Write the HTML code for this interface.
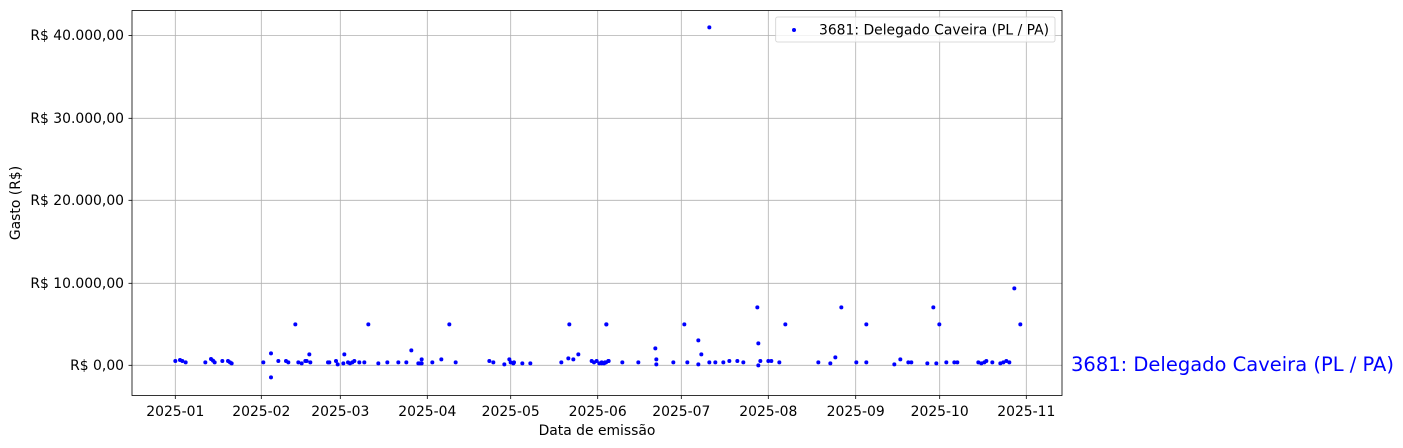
<!DOCTYPE html>
<html><head><meta charset="utf-8"><style>
html,body{margin:0;padding:0;background:#fff;}
svg{display:block;font-family:"DejaVu Sans","Liberation Sans",sans-serif;}
</style></head><body>
<svg width="1403" height="448" viewBox="0 0 1403 448" xmlns="http://www.w3.org/2000/svg">
<rect width="1403" height="448" fill="#fff"/>
<g stroke="#b0b0b0" stroke-width="0.8">
<line x1="175.3" y1="10.5" x2="175.3" y2="395.5"/>
<line x1="261.3" y1="10.5" x2="261.3" y2="395.5"/>
<line x1="340.3" y1="10.5" x2="340.3" y2="395.5"/>
<line x1="427.3" y1="10.5" x2="427.3" y2="395.5"/>
<line x1="510.7" y1="10.5" x2="510.7" y2="395.5"/>
<line x1="597.7" y1="10.5" x2="597.7" y2="395.5"/>
<line x1="681.3" y1="10.5" x2="681.3" y2="395.5"/>
<line x1="768.3" y1="10.5" x2="768.3" y2="395.5"/>
<line x1="855.7" y1="10.5" x2="855.7" y2="395.5"/>
<line x1="939.7" y1="10.5" x2="939.7" y2="395.5"/>
<line x1="1026.3" y1="10.5" x2="1026.3" y2="395.5"/>
<line x1="132" y1="35.5" x2="1062" y2="35.5"/>
<line x1="132" y1="118.3" x2="1062" y2="118.3"/>
<line x1="132" y1="200.3" x2="1062" y2="200.3"/>
<line x1="132" y1="283.3" x2="1062" y2="283.3"/>
<line x1="132" y1="365.3" x2="1062" y2="365.3"/>
</g>
<g stroke="#000" stroke-width="0.8">
<line x1="175.3" y1="395.5" x2="175.3" y2="399"/>
<line x1="261.3" y1="395.5" x2="261.3" y2="399"/>
<line x1="340.3" y1="395.5" x2="340.3" y2="399"/>
<line x1="427.3" y1="395.5" x2="427.3" y2="399"/>
<line x1="510.7" y1="395.5" x2="510.7" y2="399"/>
<line x1="597.7" y1="395.5" x2="597.7" y2="399"/>
<line x1="681.3" y1="395.5" x2="681.3" y2="399"/>
<line x1="768.3" y1="395.5" x2="768.3" y2="399"/>
<line x1="855.7" y1="395.5" x2="855.7" y2="399"/>
<line x1="939.7" y1="395.5" x2="939.7" y2="399"/>
<line x1="1026.3" y1="395.5" x2="1026.3" y2="399"/>
<line x1="128.5" y1="35.5" x2="132" y2="35.5"/>
<line x1="128.5" y1="118.3" x2="132" y2="118.3"/>
<line x1="128.5" y1="200.3" x2="132" y2="200.3"/>
<line x1="128.5" y1="283.3" x2="132" y2="283.3"/>
<line x1="128.5" y1="365.3" x2="132" y2="365.3"/>
</g>
<g fill="#0000ff">
<g transform="translate(120,0) scale(0.3333333)">
<circle cx="166" cy="1083" r="6"/><circle cx="180" cy="1080" r="6"/><circle cx="187" cy="1083" r="6"/><circle cx="197" cy="1087" r="6"/><circle cx="256" cy="1087" r="6"/><circle cx="273" cy="1077" r="6"/><circle cx="279" cy="1082" r="6"/><circle cx="284" cy="1087" r="6"/><circle cx="307" cy="1083" r="6"/><circle cx="324" cy="1083" r="6"/><circle cx="330" cy="1087" r="6"/><circle cx="335" cy="1090" r="6"/><circle cx="430" cy="1087" r="6"/><circle cx="453" cy="1060" r="6"/><circle cx="453" cy="1132" r="6"/><circle cx="475" cy="1083" r="6"/><circle cx="498" cy="1083" r="6"/><circle cx="505" cy="1087" r="6"/><circle cx="526" cy="973" r="6"/><circle cx="535" cy="1087" r="6"/><circle cx="545" cy="1090" r="6"/><circle cx="556" cy="1083" r="6"/><circle cx="560" cy="1083" r="6"/><circle cx="568" cy="1063" r="6"/><circle cx="571" cy="1087" r="6"/><circle cx="624" cy="1087" r="6"/><circle cx="628" cy="1087" r="6"/><circle cx="648" cy="1083" r="6"/><circle cx="653" cy="1093" r="6"/><circle cx="670" cy="1090" r="6"/><circle cx="673" cy="1063" r="6"/><circle cx="684" cy="1087" r="6"/><circle cx="690" cy="1090" r="6"/><circle cx="697" cy="1087" r="6"/><circle cx="703" cy="1083" r="6"/><circle cx="718" cy="1087" r="6"/><circle cx="733" cy="1087" r="6"/><circle cx="745" cy="973" r="6"/><circle cx="775" cy="1090" r="6"/><circle cx="802" cy="1087" r="6"/><circle cx="835" cy="1087" r="6"/><circle cx="859" cy="1087" r="6"/><circle cx="874" cy="1051" r="6"/><circle cx="895" cy="1090" r="6"/><circle cx="900" cy="1090" r="6"/><circle cx="905" cy="1078" r="6"/><circle cx="905" cy="1090" r="6"/><circle cx="937" cy="1087" r="6"/><circle cx="964" cy="1078" r="6"/><circle cx="988" cy="973" r="6"/><circle cx="1007" cy="1087" r="6"/><circle cx="1108" cy="1083" r="6"/><circle cx="1120" cy="1087" r="6"/><circle cx="1153" cy="1093" r="6"/><circle cx="1168" cy="1078" r="6"/><circle cx="1172" cy="1087" r="6"/><circle cx="1180" cy="1090" r="6"/><circle cx="1182" cy="1087" r="6"/><circle cx="1207" cy="1090" r="6"/><circle cx="1231" cy="1090" r="6"/><circle cx="1324" cy="1087" r="6"/><circle cx="1345" cy="1075" r="6"/><circle cx="1348" cy="973" r="6"/><circle cx="1360" cy="1078" r="6"/><circle cx="1375" cy="1063" r="6"/><circle cx="1415" cy="1083" r="6"/><circle cx="1422" cy="1087" r="6"/><circle cx="1430" cy="1083" r="6"/><circle cx="1438" cy="1090" r="6"/><circle cx="1445" cy="1090" r="6"/><circle cx="1452" cy="1090" r="6"/><circle cx="1458" cy="1087" r="6"/><circle cx="1459" cy="973" r="6"/><circle cx="1466" cy="1083" r="6"/>
</g>
<g transform="translate(600,0) scale(0.3333333)">
<circle cx="5" cy="1087" r="6"/><circle cx="15" cy="1087" r="6"/><circle cx="19" cy="973" r="6"/><circle cx="25" cy="1083" r="6"/><circle cx="67" cy="1087" r="6"/><circle cx="115" cy="1087" r="6"/><circle cx="166" cy="1045" r="6"/><circle cx="169" cy="1078" r="6"/><circle cx="169" cy="1093" r="6"/><circle cx="220" cy="1087" r="6"/><circle cx="253" cy="973" r="6"/><circle cx="262" cy="1087" r="6"/><circle cx="295" cy="1021" r="6"/><circle cx="295" cy="1093" r="6"/><circle cx="304" cy="1063" r="6"/><circle cx="328" cy="1087" r="6"/><circle cx="328" cy="82" r="6"/><circle cx="346" cy="1087" r="6"/><circle cx="370" cy="1087" r="6"/><circle cx="388" cy="1083" r="6"/><circle cx="412" cy="1083" r="6"/><circle cx="430" cy="1087" r="6"/><circle cx="472" cy="922" r="6"/><circle cx="475" cy="1030" r="6"/><circle cx="475" cy="1096" r="6"/><circle cx="481" cy="1083" r="6"/><circle cx="505" cy="1083" r="6"/><circle cx="514" cy="1083" r="6"/><circle cx="538" cy="1087" r="6"/><circle cx="556" cy="973" r="6"/><circle cx="655" cy="1087" r="6"/><circle cx="691" cy="1090" r="6"/><circle cx="706" cy="1072" r="6"/><circle cx="724" cy="922" r="6"/><circle cx="769" cy="1087" r="6"/><circle cx="799" cy="973" r="6"/><circle cx="799" cy="1087" r="6"/><circle cx="883" cy="1093" r="6"/><circle cx="901" cy="1078" r="6"/><circle cx="925" cy="1087" r="6"/><circle cx="934" cy="1087" r="6"/><circle cx="982" cy="1090" r="6"/><circle cx="1000" cy="922" r="6"/><circle cx="1009" cy="1090" r="6"/><circle cx="1018" cy="973" r="6"/><circle cx="1039" cy="1087" r="6"/><circle cx="1063" cy="1087" r="6"/><circle cx="1072" cy="1087" r="6"/><circle cx="1135" cy="1087" r="6"/><circle cx="1144" cy="1090" r="6"/><circle cx="1153" cy="1087" r="6"/><circle cx="1159" cy="1083" r="6"/><circle cx="1177" cy="1087" r="6"/><circle cx="1201" cy="1090" r="6"/><circle cx="1210" cy="1087" r="6"/><circle cx="1219" cy="1083" r="6"/><circle cx="1228" cy="1087" r="6"/><circle cx="1243" cy="865" r="6"/><circle cx="1261" cy="973" r="6"/>
</g>
</g>
<rect x="132" y="10.5" width="930" height="385" fill="none" stroke="#000" stroke-width="0.8"/>
<rect x="775.7" y="17" width="279.3" height="25" rx="2" fill="#fff" fill-opacity="0.8" stroke="#d0d0d0" stroke-width="0.8"/>
<circle cx="794" cy="30" r="2" fill="#0000ff"/>
<text x="819" y="34.5" font-size="13.9" fill="#000">3681: Delegado Caveira (PL / PA)</text>
<g font-size="13.9" fill="#000" text-anchor="end">
<text x="124" y="40">R$ 40.000,00</text>
<text x="124" y="123">R$ 30.000,00</text>
<text x="124" y="205">R$ 20.000,00</text>
<text x="124" y="288">R$ 10.000,00</text>
<text x="124" y="370">R$ 0,00</text>
</g>
<g font-size="13.9" fill="#000" text-anchor="middle">
<text x="175.3" y="416">2025-01</text>
<text x="261.3" y="416">2025-02</text>
<text x="340.3" y="416">2025-03</text>
<text x="427.3" y="416">2025-04</text>
<text x="510.7" y="416">2025-05</text>
<text x="597.7" y="416">2025-06</text>
<text x="681.3" y="416">2025-07</text>
<text x="768.3" y="416">2025-08</text>
<text x="855.7" y="416">2025-09</text>
<text x="939.7" y="416">2025-10</text>
<text x="1026.3" y="416">2025-11</text>
<text x="597" y="435">Data de emissão</text>
<text x="0" y="0" transform="translate(20,203) rotate(-90)">Gasto (R$)</text>
</g>
<text x="1071" y="371" font-size="19.5" fill="#0000ff">3681: Delegado Caveira (PL / PA)</text>
</svg>
</body></html>
